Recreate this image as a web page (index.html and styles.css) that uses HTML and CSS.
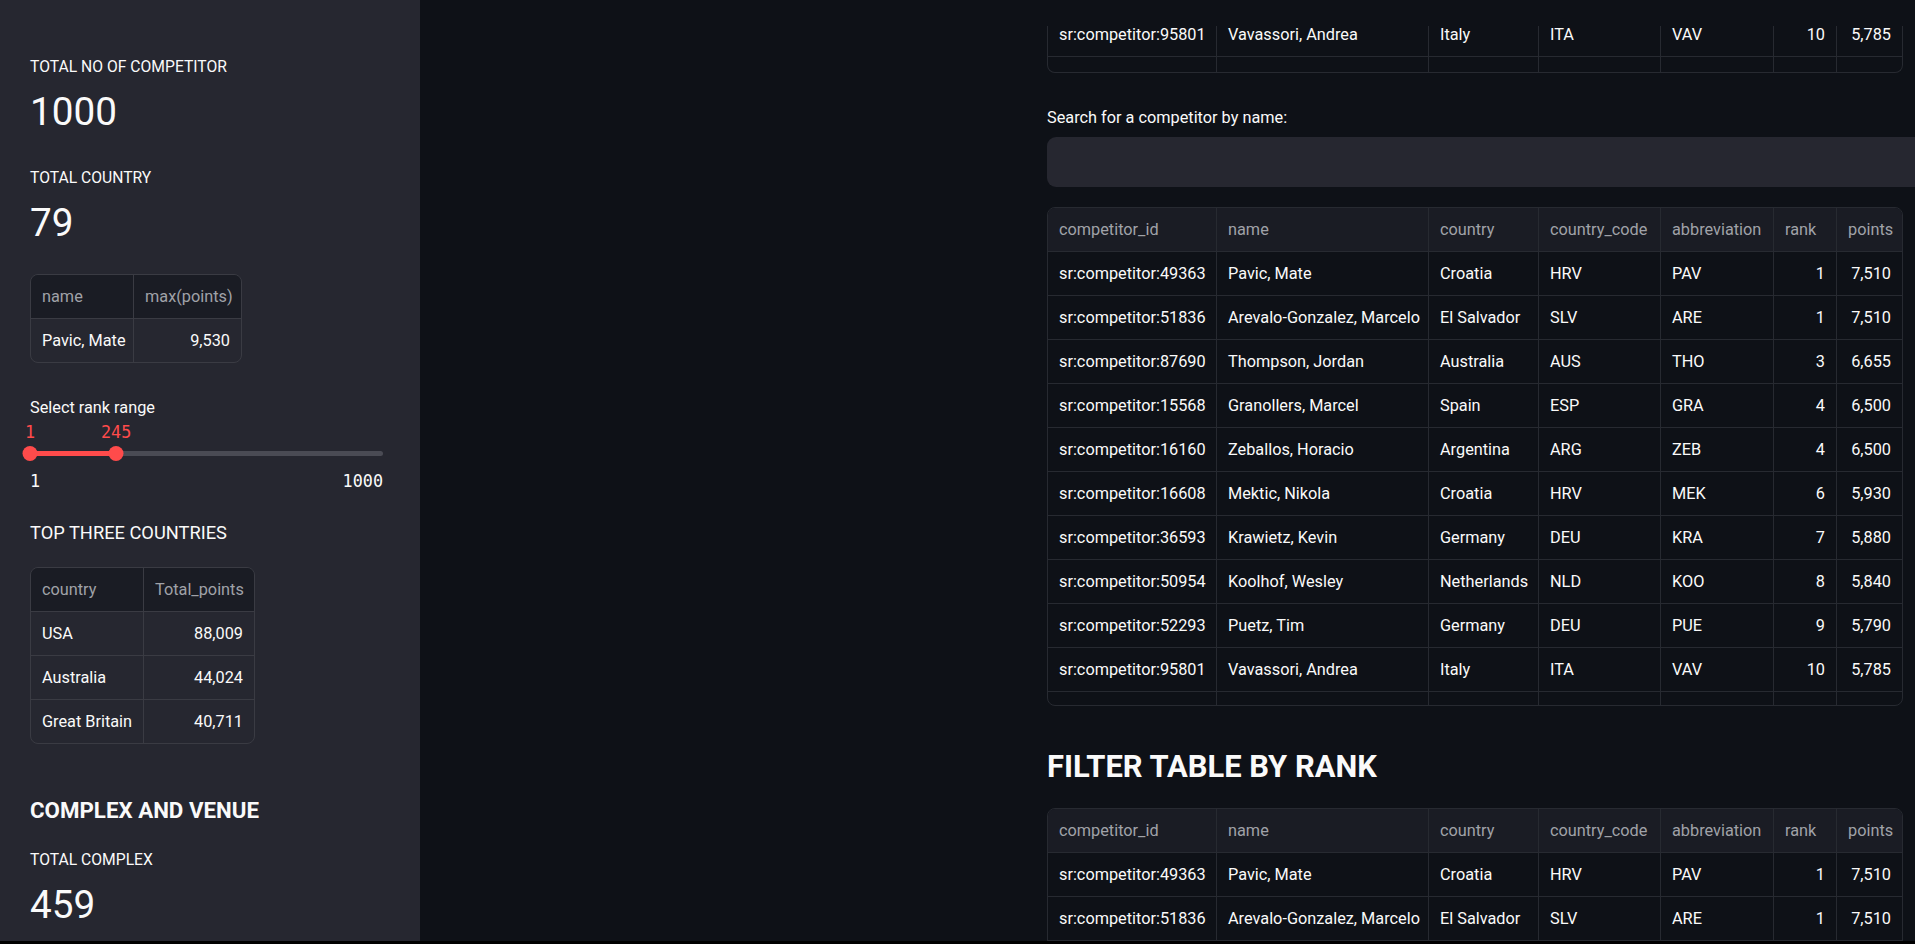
FILE: index.html
```html
<!DOCTYPE html>
<html lang="en">
<head>
<meta charset="utf-8">
<title>Competitors</title>
<link rel="stylesheet" href="styles.css">
</head>
<body>
<div class="app">
  <aside class="sidebar">
    <div class="metric">
      <div class="metric-label">TOTAL NO OF COMPETITOR</div>
      <div class="metric-value">1000</div>
    </div>
    <div class="metric metric-next">
      <div class="metric-label">TOTAL COUNTRY</div>
      <div class="metric-value">79</div>
    </div>

    <div class="sdf sdf-max">
      <div class="cell head">name</div><div class="cell head">max(points)</div>
      <div class="cell last">Pavic, Mate</div><div class="cell num last">9,530</div>
    </div>

    <div class="slider-label">Select rank range</div>
    <div class="slider">
      <div class="slider-vals">
        <span class="slider-val" style="left:0%">1</span>
        <span class="slider-val" style="left:24.4%">245</span>
      </div>
      <div class="slider-track">
        <div class="rail">
          <div class="fill" style="width:24.4%"></div>
        </div>
        <span class="thumb" style="left:0%"></span>
        <span class="thumb" style="left:24.4%"></span>
      </div>
      <div class="slider-ends"><span>1</span><span>1000</span></div>
    </div>

    <div class="subhead">TOP THREE COUNTRIES</div>
    <div class="sdf sdf-top">
      <div class="cell head">country</div><div class="cell head">Total_points</div>
      <div class="cell">USA</div><div class="cell num">88,009</div>
      <div class="cell">Australia</div><div class="cell num">44,024</div>
      <div class="cell last">Great Britain</div><div class="cell num last">40,711</div>
    </div>

    <div class="section">COMPLEX AND VENUE</div>
    <div class="metric metric-complex">
      <div class="metric-label">TOTAL COMPLEX</div>
      <div class="metric-value">459</div>
    </div>
  </aside>

  <main class="main">
    <div class="df df-frag">
      <div class="df-inner df-scrolled">
        <div class="cell">sr:competitor:95801</div><div class="cell">Vavassori, Andrea</div><div class="cell">Italy</div><div class="cell">ITA</div><div class="cell">VAV</div><div class="cell num">10</div><div class="cell num">5,785</div>
        <div class="cell">sr:competitor:57163</div><div class="cell">Bolelli, Simone</div><div class="cell">Italy</div><div class="cell">ITA</div><div class="cell">BOL</div><div class="cell num">10</div><div class="cell num">5,785</div>
      </div>
    </div>

    <label class="search-label">Search for a competitor by name:</label>
    <div class="search-input"></div>

    <div class="df df-main">
      <div class="df-inner">
        <div class="cell head">competitor_id</div><div class="cell head">name</div><div class="cell head">country</div><div class="cell head">country_code</div><div class="cell head">abbreviation</div><div class="cell head">rank</div><div class="cell head">points</div>
        <div class="cell">sr:competitor:49363</div><div class="cell">Pavic, Mate</div><div class="cell">Croatia</div><div class="cell">HRV</div><div class="cell">PAV</div><div class="cell num">1</div><div class="cell num">7,510</div>
        <div class="cell">sr:competitor:51836</div><div class="cell">Arevalo-Gonzalez, Marcelo</div><div class="cell">El Salvador</div><div class="cell">SLV</div><div class="cell">ARE</div><div class="cell num">1</div><div class="cell num">7,510</div>
        <div class="cell">sr:competitor:87690</div><div class="cell">Thompson, Jordan</div><div class="cell">Australia</div><div class="cell">AUS</div><div class="cell">THO</div><div class="cell num">3</div><div class="cell num">6,655</div>
        <div class="cell">sr:competitor:15568</div><div class="cell">Granollers, Marcel</div><div class="cell">Spain</div><div class="cell">ESP</div><div class="cell">GRA</div><div class="cell num">4</div><div class="cell num">6,500</div>
        <div class="cell">sr:competitor:16160</div><div class="cell">Zeballos, Horacio</div><div class="cell">Argentina</div><div class="cell">ARG</div><div class="cell">ZEB</div><div class="cell num">4</div><div class="cell num">6,500</div>
        <div class="cell">sr:competitor:16608</div><div class="cell">Mektic, Nikola</div><div class="cell">Croatia</div><div class="cell">HRV</div><div class="cell">MEK</div><div class="cell num">6</div><div class="cell num">5,930</div>
        <div class="cell">sr:competitor:36593</div><div class="cell">Krawietz, Kevin</div><div class="cell">Germany</div><div class="cell">DEU</div><div class="cell">KRA</div><div class="cell num">7</div><div class="cell num">5,880</div>
        <div class="cell">sr:competitor:50954</div><div class="cell">Koolhof, Wesley</div><div class="cell">Netherlands</div><div class="cell">NLD</div><div class="cell">KOO</div><div class="cell num">8</div><div class="cell num">5,840</div>
        <div class="cell">sr:competitor:52293</div><div class="cell">Puetz, Tim</div><div class="cell">Germany</div><div class="cell">DEU</div><div class="cell">PUE</div><div class="cell num">9</div><div class="cell num">5,790</div>
        <div class="cell">sr:competitor:95801</div><div class="cell">Vavassori, Andrea</div><div class="cell">Italy</div><div class="cell">ITA</div><div class="cell">VAV</div><div class="cell num">10</div><div class="cell num">5,785</div>
        <div class="cell">sr:competitor:57163</div><div class="cell">Bolelli, Simone</div><div class="cell">Italy</div><div class="cell">ITA</div><div class="cell">BOL</div><div class="cell num">10</div><div class="cell num">5,785</div>
      </div>
    </div>

    <h2 class="page-h2">FILTER TABLE BY RANK</h2>

    <div class="df df-filter">
      <div class="df-inner">
        <div class="cell head">competitor_id</div><div class="cell head">name</div><div class="cell head">country</div><div class="cell head">country_code</div><div class="cell head">abbreviation</div><div class="cell head">rank</div><div class="cell head">points</div>
        <div class="cell">sr:competitor:49363</div><div class="cell">Pavic, Mate</div><div class="cell">Croatia</div><div class="cell">HRV</div><div class="cell">PAV</div><div class="cell num">1</div><div class="cell num">7,510</div>
        <div class="cell">sr:competitor:51836</div><div class="cell">Arevalo-Gonzalez, Marcelo</div><div class="cell">El Salvador</div><div class="cell">SLV</div><div class="cell">ARE</div><div class="cell num">1</div><div class="cell num">7,510</div>
        <div class="cell">sr:competitor:87690</div><div class="cell">Thompson, Jordan</div><div class="cell">Australia</div><div class="cell">AUS</div><div class="cell">THO</div><div class="cell num">3</div><div class="cell num">6,655</div>
      </div>
    </div>
  </main>
</div>
<div class="bottom-bar"></div>
</body>
</html>
```
FILE: styles.css
```css
html, body {
  margin: 0;
  padding: 0;
}
body {
  width: 1915px;
  height: 944px;
  overflow: hidden;
  background: #0e1117;
  color: #fafafa;
  font-family: Roboto, "Noto Sans", sans-serif;
  display: flex;
  flex-direction: column;
}
.app {
  display: flex;
  height: 941px;
  overflow: hidden;
}
.bottom-bar {
  height: 3px;
  background: #000;
}

/* ---------- sidebar ---------- */
.sidebar {
  width: 420px;
  flex: none;
  background: #262730;
  box-sizing: border-box;
  padding: 57px 0 0 30px;
  display: flex;
  flex-direction: column;
  align-items: flex-start;
}
.metric-label {
  font-size: 15.7px;
  line-height: 20px;
  height: 20px;
}
.metric-value {
  font-size: 38.7px;
  line-height: 48px;
  height: 48px;
  margin-top: 11px;
}
.metric-next { margin-top: 32px; }
.metric-complex { margin-top: 26px; }

.sdf {
  display: grid;
  border: 1px solid #3a3b43;
  border-radius: 8px;
  overflow: hidden;
  font-size: 16.3px;
}
.sdf-max {
  margin-top: 27px;
  grid-template-columns: 103px 107px;
}
.sdf-top {
  margin-top: 22px;
  grid-template-columns: 113px 110px;
}
.sdf .cell {
  height: 44px;
  box-sizing: border-box;
  display: flex;
  align-items: center;
  padding: 0 11px;
  border-bottom: 1px solid #3a3b43;
  white-space: nowrap;
}
.sdf .cell:nth-child(odd) { border-right: 1px solid #3a3b43; }
.sdf .cell.last { border-bottom: none; height: 43px; }
.sdf .cell.head {
  background: #1a1c24;
  color: #a0a2a8;
}
.cell.num { justify-content: flex-end; }

.slider-label {
  margin-top: 35px;
  font-size: 16.3px;
  line-height: 20px;
  height: 20px;
}
.slider {
  margin-top: 4px;
  width: 353px;
  font-family: "DejaVu Sans Mono", "Liberation Mono", monospace;
  font-size: 16.8px;
}
.slider-vals {
  position: relative;
  height: 20px;
  line-height: 20px;
  color: #ff4b4b;
}
.slider-val {
  position: absolute;
  top: 0;
  transform: translateX(-50%);
}
.slider-track {
  position: relative;
  height: 22px;
}
.rail {
  position: relative;
  top: 9px;
  height: 5px;
  border-radius: 3px;
  background: #4a4b54;
}
.fill {
  height: 100%;
  background: #ff4b4b;
  border-radius: 3px;
}
.thumb {
  position: absolute;
  top: 4px;
  width: 15px;
  height: 15px;
  border-radius: 50%;
  background: #ff4b4b;
  transform: translateX(-50%);
}
.slider-ends {
  margin-top: 7px;
  height: 20px;
  line-height: 20px;
  display: flex;
  justify-content: space-between;
}

.subhead {
  margin-top: 30px;
  font-size: 18.3px;
  line-height: 24px;
  height: 24px;
}
.section {
  margin-top: 52px;
  font-size: 22.3px;
  font-weight: 700;
  line-height: 28px;
  height: 28px;
}

/* ---------- main ---------- */
.main {
  flex: 1;
  min-width: 0;
  overflow: hidden;
  box-sizing: border-box;
  padding: 26px 0 0 627px;
  display: flex;
  flex-direction: column;
  align-items: flex-start;
}
.df {
  border: 1px solid #272a31;
  border-radius: 8px;
  overflow: hidden;
  box-sizing: border-box;
  font-size: 16.3px;
  flex: none;
}
.df-inner {
  display: grid;
  grid-template-columns: 169px 212px 110px 122px 113px 63px 65px;
}
.df .cell {
  height: 44px;
  box-sizing: border-box;
  display: flex;
  align-items: center;
  padding: 0 11px;
  border-bottom: 1px solid #272a31;
  border-right: 1px solid #272a31;
  white-space: nowrap;
  overflow: hidden;
}
.df .cell:nth-child(7n) { border-right: none; }
.df .cell.head {
  background: #1a1c24;
  color: #a0a2a8;
}
.df-frag {
  height: 47px;
  border-top: none;
  border-radius: 0 0 8px 8px;
}
.df-scrolled { margin-top: -13px; }
.df-main {
  margin-top: 20px;
  height: 499px;
}
.df-filter {
  margin-top: 21px;
  height: 200px;
}

.search-label {
  margin-top: 35px;
  font-size: 16.3px;
  line-height: 20px;
  height: 20px;
}
.search-input {
  margin-top: 9px;
  width: 900px;
  height: 50px;
  flex: none;
  background: #262730;
  border-radius: 9px;
}
.page-h2 {
  margin: 41px 0 0;
  font-size: 30.9px;
  font-weight: 700;
  line-height: 40px;
  height: 40px;
}
```
